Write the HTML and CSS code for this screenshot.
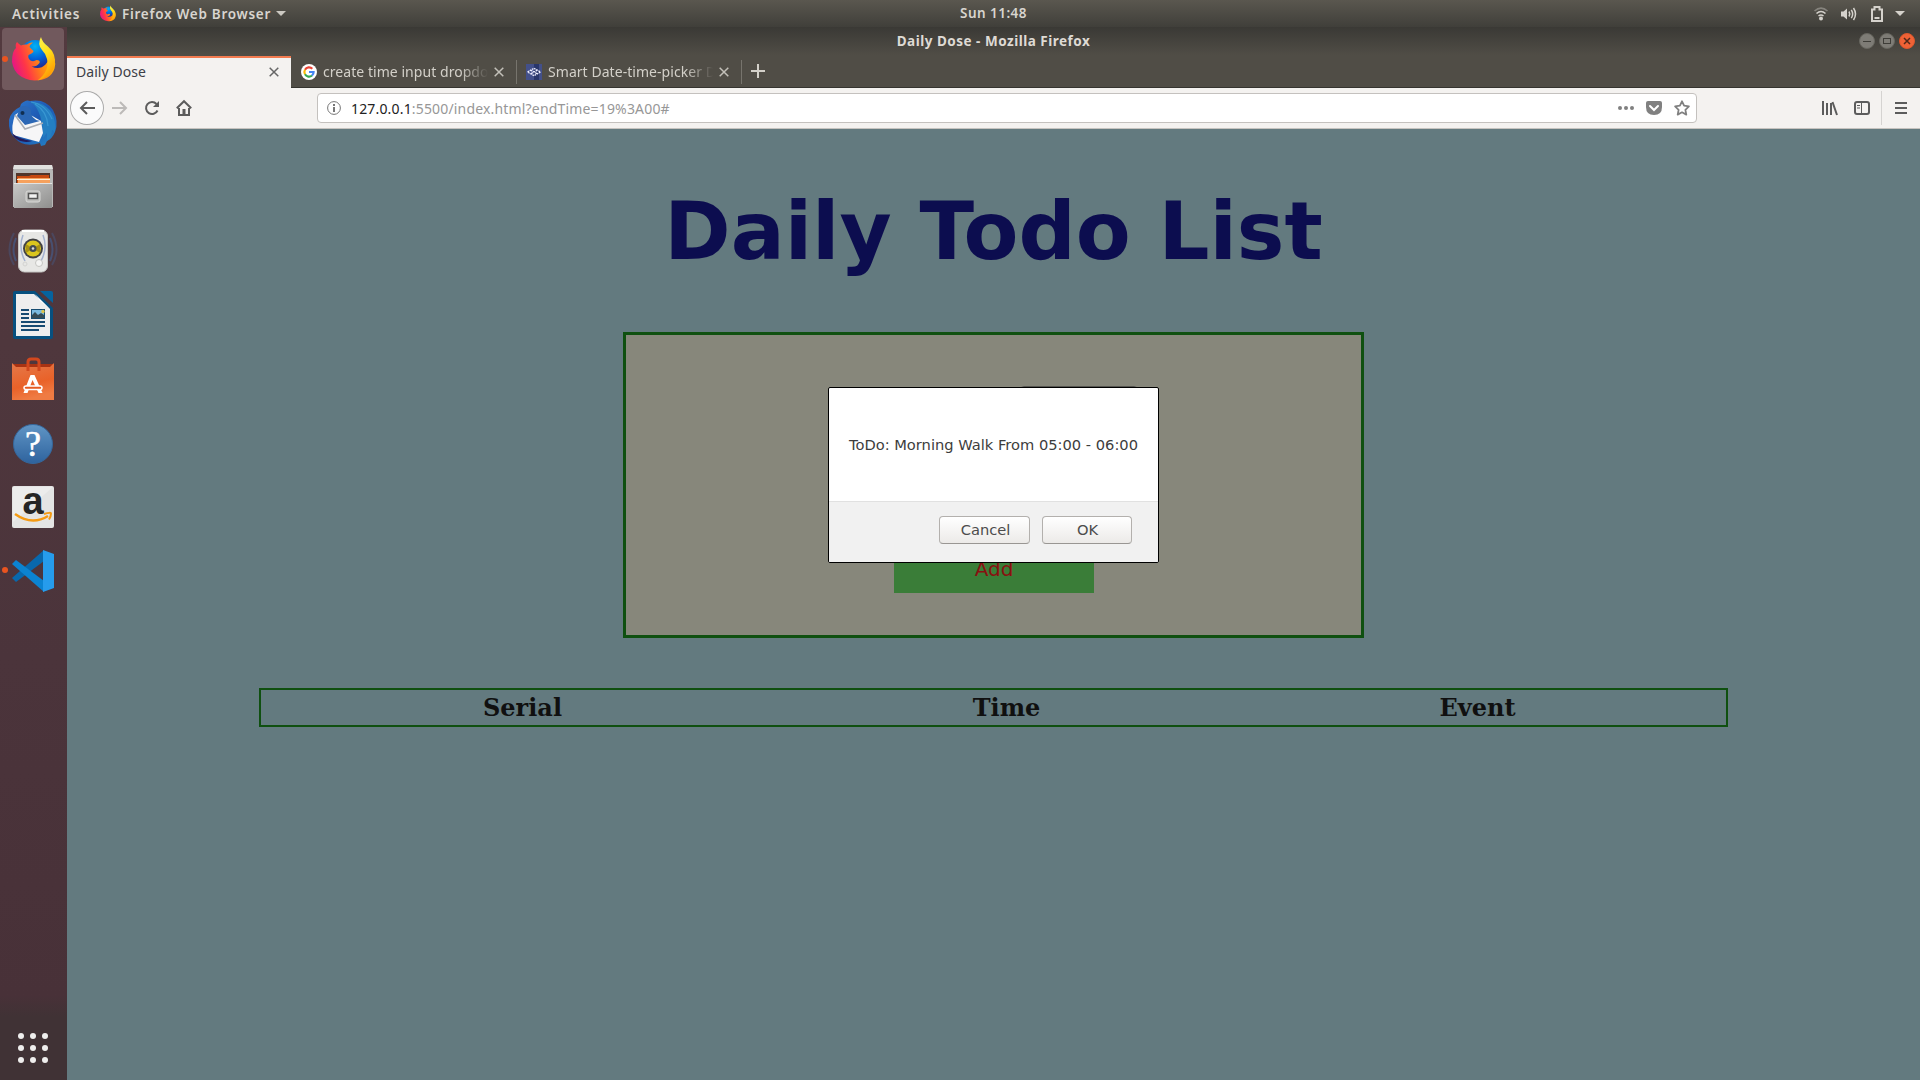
FILE: index.html
```html
<!DOCTYPE html>
<html lang="en">
<head>
<meta charset="utf-8">
<title>Daily Dose</title>
<link rel="stylesheet" href="styles.css">
</head>
<body>
<header class="topbar">
  <span class="activities">Activities</span>
  <svg class="ff-small" viewBox="0 0 44 46"><use href="#firefox"/></svg>
  <span class="appname">Firefox Web Browser</span>
  <svg class="caret" width="10" height="5"><path d="M0 0h10L5 5z" fill="#ccc9c2"/></svg>
  <span class="clock">Sun 11:48</span>
  <div class="tray">
    <svg width="14" height="14" viewBox="0 0 14 14" fill="none" stroke="#d5d2cc" stroke-width="1.6"><path d="M.5 4Q7-1.8 13.500 4" opacity=".4"/><path d="M2.500 6.500Q7 2.500 11.500 6.500M4.500 9Q7 7 9.500 9"/><circle cx="7" cy="11.500" r="2" fill="#d5d2cc" stroke="none"/></svg>
    <svg width="16" height="14" viewBox="0 0 16 14" fill="none" stroke="#d5d2cc" stroke-width="1.500"><path d="M0 4.500h2.500L6 1.500v11L2.500 9.500H0z" fill="#d5d2cc" stroke="none"/><path d="M8 4.500q1.500 2.500 0 5M10.300 2.800q2.700 4.200 0 8.400M12.500 1q4 6 0 12"/></svg>
    <svg class="battery" width="12" height="16" viewBox="0 0 12 16" fill="none" stroke="#d5d2cc" stroke-width="2"><path d="M1 3.500h2.500V1h5v2.500H11V15H1zM3.500 12h5"/></svg>
    <svg width="10" height="5"><path d="M0 0h10L5 5z" fill="#d5d2cc"/></svg>
  </div>
</header>

<div class="desktop">
<nav class="dock">
  <div class="app active running"><svg width="44" height="46" viewBox="0 0 44 46">
    <defs>
      <radialGradient id="globe" cx=".5" cy=".2" r=".8"><stop offset="0" stop-color="#00b3f5"/><stop offset=".5" stop-color="#0260d6"/><stop offset="1" stop-color="#2b1478"/></radialGradient>
      <linearGradient id="flame" x1="0" y1=".6" x2="1" y2=".3"><stop offset="0" stop-color="#e31587"/><stop offset=".28" stop-color="#ff3647"/><stop offset=".6" stop-color="#ff8515"/><stop offset="1" stop-color="#ffc800"/></linearGradient>
      <linearGradient id="tail" x1="0" y1="0" x2=".4" y2="1"><stop offset="0" stop-color="#fff44f"/><stop offset=".5" stop-color="#ffe01a"/><stop offset="1" stop-color="#ff9b05"/></linearGradient>
      <g id="firefox"><circle cx="23" cy="20" r="16" fill="url(#globe)"/>
      <path d="M5 6q2 2 4 3.500 3-1.500 6-1 3-2.500 6-2-3 2-3.500 4.500l4 4q0 2-5 4-1 3 2 5.500 3 1.500 6-.5 4 0 3 3-3 4-8 3.500 8 4 14-2 5-5 2-14 10 8 7 18-4 12-20 12Q3 43 0 26 0 15 4 12 3 8 5 6z" fill="url(#flame)"/>
      <path d="M29 1q1 5 7 9.500 9 8 6.500 19-2 7-8 11-4 3-9 4Q38 35 35 23q-1-5-5-9-5-6-1-13z" fill="url(#tail)"/></g>
    </defs><use href="#firefox"/></svg></div>
  <div class="app low"><svg width="50" height="50" viewBox="0 0 50 50">
    <defs><linearGradient id="bird" x1="0" y1="0" x2="1" y2="1"><stop offset="0" stop-color="#2f7bd0"/><stop offset=".5" stop-color="#1d58b2"/><stop offset="1" stop-color="#2587c8"/></linearGradient></defs>
    <path d="M13 5q5-5 9-3Q37-1 45 11q6 11 2 22-3 7-8 9l-2 4-4 1-1-3Q15 49 7 39 0 33 1 21 3 12 12 8z" fill="url(#bird)"/>
    <path d="M23 3q12 9 12 36l4-5v8q5-5 5-11l3 2q2-23-16-29z" fill="#247fc2"/><path d="M27 5q12 7 13 22M23 3q14 2 21 17" fill="none" stroke="#3997d2" stroke-width="1.200"/>
    <path d="M7 16L14 11 33 22 35 34 31 43 5 36Q3 27 7 16z" fill="#f6f6f7"/><path d="M7 16l10 14 18-6" fill="none" stroke="#a9adb4" stroke-width="1.500"/>
    <path d="M12 8q7-3 11 3-1 9 9 11L17 26 9 17z" fill="#2b67b5"/><path d="M4 34q6 6 20 8-10 3-18-4z" fill="#241b59"/><circle cx="14.500" cy="14" r="2" fill="#102e50"/></svg></div>
  <div class="app"><svg width="42" height="44" viewBox="0 0 42 44">
    <defs><linearGradient id="steel" x2="1" y2="1"><stop offset="0" stop-color="#c8c8c7"/><stop offset="1" stop-color="#8f8f8e"/></linearGradient></defs>
    <path d="M2 0h38l1 6v36H1V6z" fill="#b8b8b7"/><path d="M2 0h38l1 4H1z" fill="#e1e1df"/><path d="M4 8h34v11H4z" fill="#51352b"/><path d="M5 11h12l2-1h18v8H5z" fill="#c74910"/><path d="M6 13h32v5H6z" fill="#f6a15d"/><path d="M5 14h33v1H5z" fill="#fff0d8"/><path d="M2 18h38v25H2z" fill="url(#steel)"/><path d="M2 18h38v1H2z" fill="#e3e3e2"/><rect x="14" y="26" width="14" height="11" rx="2" fill="#bcbcba" stroke="#d8d8d6"/><rect x="16.500" y="28.500" width="9" height="5" fill="#f2f2f1" stroke="#555" stroke-width="1.500"/></svg></div>
  <div class="app"><svg width="50" height="46" viewBox="0 0 50 46" fill="none">
    <g stroke="#46567e" stroke-width="2"><path d="M6 5q-9 17 0 32M44 5q9 17 0 32" opacity=".5"/><path d="M8 10q-5 11 0 23M42 10q5 11 0 23" opacity=".8"/></g>
    <rect x="10.500" y="2" width="29" height="42" rx="6" fill="#e7e7e5" stroke="#c4c4c2"/><path d="M14 3h22" stroke="#fff" stroke-width="2"/><path d="M15 7q-5 13 2 26M35 7q5 13-2 26" stroke="#a4b2cf" stroke-width="1.500"/><circle cx="25" cy="20.500" r="10" fill="#424244"/><circle cx="25" cy="20.500" r="8" fill="#dac51e"/><path d="M25 20.500L18 16v9zM25 20.500l7-4.500v9z" fill="#a79115"/><circle cx="25" cy="20.500" r="3.500" fill="#444b50"/><circle cx="25" cy="20.500" r="1.300" fill="#ddd"/><circle cx="31" cy="35" r="3.500" fill="#f4f4f3" stroke="#c5c5c2"/><circle cx="17" cy="36" r="2" stroke="#d3d3d1"/></svg></div>
  <div class="app"><svg width="40" height="48" viewBox="0 0 40 48">
    <path d="M2 0h20l18 17v29q0 2-2 2H2q-2 0-2-2V2Q0 0 2 0z" fill="#07507f"/><path d="M27 0h11q2 0 2 2v10z" fill="#06639e"/><path d="M3 3h18l16 15v27H3z" fill="#eee"/><path d="M22 3l15 15-10-8z" fill="#fff"/><path d="M8 19h8M8 23h8M8 27h8M8 31h24M8 35h24M8 39h18" stroke="#174b72" stroke-width="2"/><rect x="18.500" y="18.500" width="13" height="9" fill="#79b9df" stroke="#164b70"/><path d="M19 27v-3l3-3 3 3 3-2 3 2v3z" fill="#354b55"/><circle cx="30" cy="20.500" r="1.700" fill="#dfc449"/></svg></div>
  <div class="app"><svg width="42" height="44" viewBox="0 0 42 44">
    <defs><linearGradient id="bag" y2="1" x2=".3"><stop offset="0" stop-color="#e5794a"/><stop offset=".65" stop-color="#e96229"/><stop offset="1" stop-color="#ef7b43"/></linearGradient></defs>
    <path d="M1 7h40v9H1z" fill="#a93313"/><path d="M0 6l4 4h34l4-4v37H0z" fill="url(#bag)"/><path d="M16 14V5q0-3 3-3h5q3 0 3 3v9" fill="none" stroke="#d2481e" stroke-width="3"/><path d="M18.500 18h4l8 18h-4l-6-13-5 13h-4z" fill="#fff"/><path d="M14 29h14q2 0 2 1.800T28 32.500H14q-2 0-2-1.700T14 29z" fill="#e55b22" stroke="#fff" stroke-width="1.500"/></svg></div>
  <div class="app low"><svg class="help" width="42" height="42" viewBox="0 0 42 42"><defs><linearGradient id="blue" y2="1" x2="0"><stop offset="0" stop-color="#6095c5"/><stop offset="1" stop-color="#2e639e"/></linearGradient></defs><circle cx="21" cy="21" r="19.500" fill="url(#blue)" stroke="#35679b"/><text x="21" y="33" text-anchor="middle">?</text></svg></div>
  <div class="app"><svg class="amazon" width="42" height="42" viewBox="0 0 42 42"><rect width="42" height="42" rx="2" fill="#e4e4e4"/><path d="M1 1h40L1 36z" fill="#ececec"/><text x="21" y="27.500" text-anchor="middle">a</text><path d="M3 28q17 12 33 2" fill="none" stroke="#f59a13" stroke-width="2.500"/><path d="M32 28q7-2 7-.5 0 3-2 6" fill="none" stroke="#f59a13" stroke-width="2"/></svg></div>
  <div class="app running"><svg width="42" height="42" viewBox="0 0 42 42"><path d="M0 28l4 4 28-21V0z" fill="#0868ad"/><path d="M0 14l4-4 28 21v11z" fill="#0b83d1"/><path d="M31 0l11 4v34l-11 4z" fill="#269cec"/></svg></div>
  <svg class="grid" width="30" height="30" viewBox="0 0 30 30" fill="#efeeed"><circle cx="3" cy="3" r="3"/><circle cx="15" cy="3" r="3"/><circle cx="27" cy="3" r="3"/><circle cx="3" cy="15" r="3"/><circle cx="15" cy="15" r="3"/><circle cx="27" cy="15" r="3"/><circle cx="3" cy="27" r="3"/><circle cx="15" cy="27" r="3"/><circle cx="27" cy="27" r="3"/></svg>
</nav>

<main class="window">
  <div class="titlebar"><span class="wintitle">Daily Dose - Mozilla Firefox</span>
    <div class="controls">
      <svg width="16" height="16"><circle cx="8" cy="8" r="7.500" fill="#7e7c76" stroke="#67665f"/><path d="M4 8.500h8" stroke="#3e3d38"/></svg>
      <svg width="16" height="16"><circle cx="8" cy="8" r="7.500" fill="#7e7c76" stroke="#67665f"/><rect x="4.500" y="5.500" width="7" height="5" fill="none" stroke="#3e3d38"/></svg>
      <svg width="16" height="16"><circle cx="8" cy="8" r="7.500" fill="#ef6236" stroke="#dc572c"/><path d="M5 5l6 6M11 5l-6 6" stroke="#512819" stroke-width="1.500"/></svg>
    </div>
  </div>
  <div class="tabs">
    <div class="tab current"><span class="label">Daily Dose</span><svg class="x" viewBox="0 0 10 10"><path d="M.7.7l8.600 8.600M9.300.7L.7 9.300"/></svg></div>
    <div class="tab"><svg class="fav" viewBox="0 0 16 16" fill="none" stroke-width="2.200"><circle cx="8" cy="8" r="8" fill="#fff"/><path d="M11.300 4.700A4.600 4.600 0 0 0 4 5.700" stroke="#ea4335"/><path d="M4 5.700a4.600 4.600 0 0 0 0 4.600" stroke="#fbbc05"/><path d="M4 10.300a4.600 4.600 0 0 0 7 1.200" stroke="#34a853"/><path d="M11 11.500A4.600 4.600 0 0 0 12.600 8H8" stroke="#4285f4"/></svg><span class="label fade">create time input dropdo</span><svg class="x" viewBox="0 0 10 10"><path d="M.7.7l8.600 8.600M9.300.7L.7 9.300"/></svg></div>
    <div class="tab"><svg class="fav" viewBox="0 0 16 16"><path fill="#43508a" d="M0 0h16v16H0z"/><path fill="#29366b" d="M8 0h5v16H8z"/><path d="M1.500 8L8 4.300 14.500 8 8 11.700zM4.800 6.200L11.200 9.800M11.200 6.200L4.800 9.800" fill="none" stroke="#eef" stroke-width="1.300" stroke-dasharray="1.800 .7"/></svg><span class="label fade">Smart Date-time-picker D</span><svg class="x" viewBox="0 0 10 10"><path d="M.7.7l8.600 8.600M9.300.7L.7 9.300"/></svg></div>
    <svg class="plus" width="14" height="14"><path d="M7 0v14M0 7h14" stroke="#d3d0c9" stroke-width="2"/></svg>
  </div>
  <div class="toolbar">
    <div class="back"><svg width="16" height="14" viewBox="0 0 16 14"><path d="M8 1L2 7l6 6M2 7h14"/></svg></div>
    <svg class="forward" width="16" height="14" viewBox="0 0 16 14"><path d="M8 1l6 6-6 6M14 7H0"/></svg>
    <svg class="reload" width="16" height="16" viewBox="0 0 16 16"><path d="M13.500 10.500a6 6 0 1 1-1-6.500"/><path d="M15 1v6H9z" class="solid"/></svg>
    <svg class="home" width="16" height="16" viewBox="0 0 16 16"><path d="M.8 8.300L8 1.200l7.200 7.100M3 8v7h10V8"/><path d="M6.500 9h3v6h-3z" class="solid"/></svg>
    <div class="urlbar">
      <svg width="14" height="14" viewBox="0 0 14 14"><circle cx="7" cy="7" r="6.400" fill="none" stroke="#777"/><path d="M6 3h2v2H6zM6 6h2v5H6z" fill="#777"/></svg>
      <span class="url"><b>127.0.0.1</b>:5500/index.html?endTime=19%3A00#</span>
      <svg width="16" height="4" fill="#808080"><circle cx="2" cy="2" r="2"/><circle cx="8" cy="2" r="2"/><circle cx="14" cy="2" r="2"/></svg>
      <svg width="16" height="14" viewBox="0 0 16 14"><path d="M2 0h12q2 0 2 2v4q0 8-8 8T0 6V2q0-2 2-2z" fill="#808080"/><path d="M4 5l4 4 4-4" stroke="#fff" stroke-width="2" fill="none" stroke-linecap="round"/></svg>
      <svg width="16" height="16" viewBox="0 0 16 16"><path d="M8 1.300l2.100 4.400 4.800.7-3.500 3.400.9 4.800L8 12.300l-4.300 2.300.9-4.800L1.100 6.400l4.800-.7z" fill="none" stroke="#808080" stroke-width="1.800" stroke-linejoin="round"/></svg>
    </div>
    <svg class="library" width="16" height="14" viewBox="0 0 16 14"><path d="M1 0v14M5 2v12M9 2v12M10.500 1l4.500 13"/></svg>
    <svg class="sidebar" width="16" height="14" viewBox="0 0 16 14"><rect x="1" y="1" width="14" height="12" rx="2"/><path d="M7.500 1v12M3 4.500h3M3 7h3" stroke-width="1"/></svg>
    <div class="menu"><svg width="12" height="12" viewBox="0 0 12 12"><path d="M0 1h12M0 6h12M0 11h12"/></svg></div>
  </div>
  <section class="page">
    <h1>Daily Todo List</h1>
    <form class="card"><input class="event" type="text"><button class="add" type="button">Add</button></form>
    <div class="table"><span>Serial</span><span>Time</span><span>Event</span></div>
    <div class="dialog">
      <div class="message">ToDo: Morning Walk From 05:00 - 06:00</div>
      <div class="actions"><button type="button" class="cancel">Cancel</button><button type="button">OK</button></div>
    </div>
  </section>
</main>
</div>
</body>
</html>
```
FILE: styles.css
```css
* { box-sizing: border-box; }
body { margin: 0; width: 1920px; height: 1080px; overflow: hidden; font-family: "Noto Sans", sans-serif; font-size: 14px; }
svg { display: block; flex: none; overflow: visible; }

.topbar { position: relative; display: flex; align-items: center; height: 27px; padding: 0 15px 0 12px; background: linear-gradient(#5a574f, #403f3a); color: #d8d5cf; font-weight: 600; white-space: nowrap; }
.activities { width: 88px; font-size: 13.5px; letter-spacing: .8px; }
.ff-small { width: 16px; height: 17px; margin-right: 6px; }
.appname { width: 154px; font-size: 13.5px; letter-spacing: .72px; }
.clock { position: absolute; left: 0; right: 0; top: 4px; text-align: center; font-size: 13.5px; letter-spacing: .45px; padding-left: 67px; }
.tray { display: flex; align-items: center; gap: 13px; margin-left: auto; }
.battery { margin: 0 -1px 0 1px; }

.desktop { display: flex; height: 1053px; }
.dock { display: flex; flex-direction: column; align-items: center; width: 67px; background: linear-gradient(#533a3f, #4b343b 60%, #483138 92%, #403235 94%, #403235); }
.app { position: relative; display: flex; align-items: center; justify-content: center; width: 67px; height: 64px; padding-right: 1px; }
.low { padding-top: 2px; }
.active { width: 62px; height: 62px; margin: 1px 1px 1px 0; padding: 0 0 0 2px; background: #71595d; border-radius: 4px; }
.running::before { content: ""; position: absolute; left: 2px; top: 28px; width: 6px; height: 6px; border-radius: 50%; background: #e95420; }
.active::before { left: 0; }
.help text { font: 36px "Liberation Serif", serif; fill: #fff; stroke: #fff; stroke-width: .6; }
.amazon text { font: bold 38px "Liberation Sans", sans-serif; fill: #252525; }
.grid { margin: auto 1px 17px 0; }

.window { display: flex; flex-direction: column; width: 1853px; }
.titlebar { position: relative; display: flex; align-items: center; justify-content: flex-end; height: 28px; padding: 0 5px 0 0; background: linear-gradient(#3a3935, #504d46); }
.wintitle { position: absolute; left: 0; right: 0; text-align: center; color: #dedad4; font-weight: 700; font-size: 13.5px; letter-spacing: .5px; top: 5px; }
.controls { display: flex; gap: 4px; }
.tabs { display: flex; height: 33px; background: #504d46; border-bottom: 1px solid #35342f; }
.tab { display: flex; align-items: center; width: 225px; padding: 1px 12px 0 10px; color: #d3d0c9; position: relative; }
.tab + .tab::after { content: ""; position: absolute; right: -1px; top: 5px; width: 1px; height: 24px; background: #77746d; }
.tab .label { flex: 1; white-space: nowrap; font-size: 14px; letter-spacing: .05px; }
.current { width: 224px; height: 33px; padding: 0 12px 3px 9px; background: #f4f2f0; color: #3d4047; border-top: 2px solid #f37b50; margin-top: 1px; }
.current .label { padding-bottom: 2px; }
.tab .fade { flex: none; width: 167px; -webkit-mask: linear-gradient(90deg, #000 82%, transparent 99%); mask: linear-gradient(90deg, #000 82%, transparent 99%); margin: 0 4px 0 6px; }
.fav { width: 16px; height: 16px; }
.x { width: 10px; height: 10px; fill: none; stroke: #c3c0b9; stroke-width: 1.5; }
.current + .tab { margin-left: 1px; width: 224px; padding-left: 9px; }
.current .x { stroke: #666; }
.plus { margin: 9px 0 0 10px; }

.toolbar { display: flex; align-items: center; height: 41px; padding: 0 13px 0 3px; background: #f4f2f0; border-bottom: 1px solid #c6c3bf; }
.toolbar > svg, .back svg, .menu svg { fill: none; stroke: #5c5c5c; stroke-width: 2; }
.toolbar .solid { fill: #5c5c5c; stroke: none; }
.back { display: flex; align-items: center; justify-content: center; width: 34px; height: 34px; border: 1px solid #aaa; border-radius: 50%; background: #fbfbfb; }
.toolbar > .forward { margin-left: 8px; stroke: #bcbab8; }
.reload { margin-left: 16px; }
.home { margin-left: 16px; }
.urlbar { display: flex; align-items: center; width: 1381px; height: 30px; margin-left: 125px; padding: 0 6px 0 9px; gap: 12px; border: 1px solid #c4c1be; border-radius: 4px; background: #fff; }
.url { flex: 1; margin-left: -2px; color: #979797; white-space: nowrap; letter-spacing: .17px; }
.url b { font-weight: 400; color: #222; }
.library { margin-left: 125px; }
.sidebar { margin-left: 16px; }
.menu { display: flex; align-items: center; height: 34px; margin-left: 11px; padding-left: 13px; border-left: 1px solid #d5d3d1; }

.page { position: relative; display: flex; flex-direction: column; align-items: center; flex: 1; background: #637a7f; }
h1 { margin: 56px 0 54px; font: bold 80px/93px "DejaVu Sans", sans-serif; color: #0c0d4f; white-space: nowrap; }
.card { display: flex; flex-direction: column; align-items: center; justify-content: space-between; width: 741px; height: 306px; padding: 51px 0 42px; border: 3px solid #0f5010; background: #87877b; }
.event { width: 118px; height: 30px; margin-left: 170px; border: 1px solid #555550; border-radius: 4px; background: #999; }
.add { width: 200px; height: 48px; padding: 0 0 0 1px; border: 0; background: #3a7d38; color: #891010; font: 20px/48px "DejaVu Sans", sans-serif; }
.table { display: flex; align-items: center; width: 1469px; height: 39px; margin-top: 50px; border: 2px solid #0f5010; color: #101010; font: bold 24px/28px "DejaVu Serif", serif; }
.table span { text-align: center; }
.table span:nth-child(1) { width: 523px; }
.table span:nth-child(2) { width: 445px; }
.table span:nth-child(3) { width: 497px; }
.dialog { position: absolute; left: 761px; top: 258px; width: 331px; height: 176px; border: 1px solid #000; border-radius: 2px; background: #fff; color: #3d3d3d; font: 14.67px "DejaVu Sans", sans-serif; overflow: hidden; }
.message { display: flex; align-items: center; justify-content: center; height: 113px; white-space: nowrap; }
.actions { display: flex; justify-content: flex-end; gap: 12px; height: 61px; padding: 14px 26px 0; border-top: 1px solid #e1e1e1; background: #f1f1f1; }
.actions button { width: 90px; height: 28px; padding: 0 0 1px 1px; border: 1px solid #b3b0ad; border-bottom-color: #999693; border-radius: 4px; background: linear-gradient(#fff, #eceae8); color: #4c4c4c; font: 14.67px "DejaVu Sans", sans-serif; }
.actions .cancel { width: 91px; padding-left: 2px; }
```
